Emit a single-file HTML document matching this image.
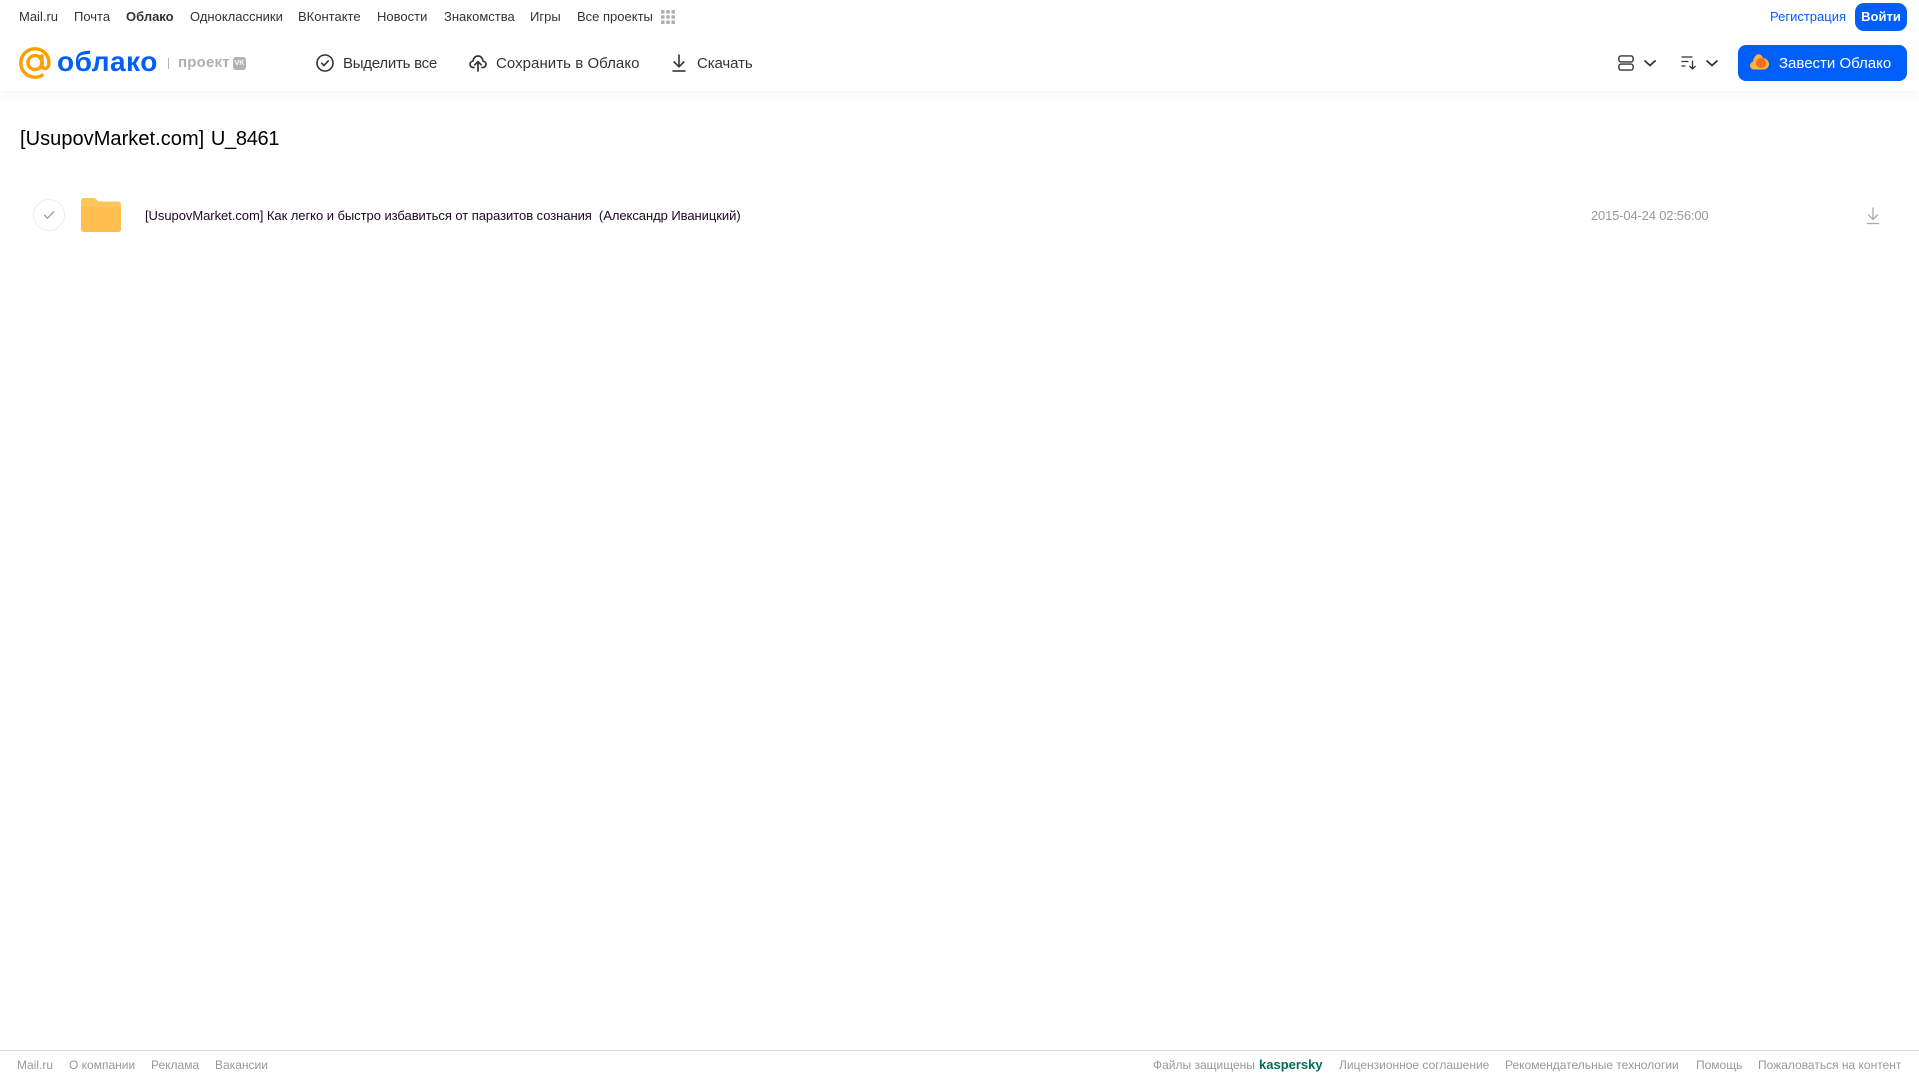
<!DOCTYPE html>
<html lang="ru"><head><meta charset="utf-8"><title>[UsupovMarket.com] U_8461</title>
<style>
html,body{margin:0;padding:0;background:#fff}
body{width:1919px;height:1079px;position:relative;overflow:hidden;font-family:"Liberation Sans",Arial,sans-serif}
.t{position:absolute;white-space:pre;line-height:20px}
.n{top:7px;font-size:13px;color:#333}
.b{top:53px;font-size:15px;color:#333;line-height:22px}
.f{top:1055px;font-size:12px;color:#999}
svg{position:absolute;overflow:visible}
#hdr{position:absolute;left:0;top:0;width:1919px;height:91px;background:#fff;box-shadow:0 2px 10px rgba(0,0,0,.06)}
</style></head><body>
<div id="hdr"></div>
<span class="t n" style="left:19px">Mail.ru</span>
<span class="t n" style="left:74px">Почта</span>
<span class="t n" style="left:126px;font-weight:bold">Облако</span>
<span class="t n" style="left:190px">Одноклассники</span>
<span class="t n" style="left:298px">ВКонтакте</span>
<span class="t n" style="left:377px">Новости</span>
<span class="t n" style="left:444px">Знакомства</span>
<span class="t n" style="left:530px">Игры</span>
<span class="t n" style="left:577px">Все проекты</span>
<svg style="left:661px;top:10px" width="14" height="14" fill="#b0b0b0"><rect width="3.6" height="3.6" rx=".8"/><rect x="5.2" width="3.6" height="3.6" rx=".8"/><rect x="10.4" width="3.6" height="3.6" rx=".8"/><rect y="5.2" width="3.6" height="3.6" rx=".8"/><rect x="5.2" y="5.2" width="3.6" height="3.6" rx=".8"/><rect x="10.4" y="5.2" width="3.6" height="3.6" rx=".8"/><rect y="10.4" width="3.6" height="3.6" rx=".8"/><rect x="5.2" y="10.4" width="3.6" height="3.6" rx=".8"/><rect x="10.4" y="10.4" width="3.6" height="3.6" rx=".8"/></svg>

<span class="t n" style="left:1770px;color:#005ff9">Регистрация</span>
<div style="position:absolute;left:1855px;top:3px;width:52px;height:28px;border-radius:9px;background:#005ff9;color:#fff;font-size:13px;font-weight:bold;line-height:27px;text-align:center">Войти</div>

<svg style="left:19px;top:47px" width="32" height="32" viewBox="0 0 32 32" fill="none" stroke="#ff9e00" stroke-width="3.4"><circle cx="16" cy="15.6" r="7"/><path d="M23 8.8v9.4c0 4.6 6.6 4.6 6.9-1.2C30.500 8 24 1.800 16 1.800 8.200 1.800 1.800 8.100 1.800 16S8.200 30.200 16 30.200c2.700 0 5.100-.7 7.100-1.900" stroke-linecap="round"/></svg>
<span class="t" style="left:57px;top:44px;font-size:28px;line-height:36px;font-weight:bold;color:#005ff9;letter-spacing:.5px">облако</span>
<div style="position:absolute;left:168px;top:58px;width:1px;height:11px;background:#b5b5b5"></div>
<span class="t" style="left:178px;top:53px;font-size:15px;line-height:20px;font-weight:bold;color:#b0b0b0;letter-spacing:.2px">проект</span>
<div style="position:absolute;left:233px;top:57px;width:13px;height:13px;border-radius:3px;background:#b3b3b3;color:#fff;font-size:7px;font-weight:bold;line-height:13px;text-align:center">VK</div>

<svg style="left:316px;top:54px" width="18" height="18" viewBox="0 0 18 18" fill="none" stroke="#333" stroke-width="1.6"><circle cx="9" cy="9" r="8"/><path d="M5.700 9.200l2.300 2.300 4.300-4.700" stroke-linecap="round" stroke-linejoin="round"/></svg>
<span class="t b" style="left:343px;letter-spacing:-.25px">Выделить все</span>
<svg style="left:469px;top:54px" width="18" height="18" viewBox="0 0 18 18" fill="none" stroke="#333" stroke-width="1.700" stroke-linecap="round" stroke-linejoin="round"><path d="M5 13.500H4.200C2.300 13.500 1 12 1 10.300c0-1.700 1.300-3 2.900-3.100C4.300 4.300 6.300 2 9 2c2.700 0 4.700 2.200 5.100 5.200 1.600.1 2.900 1.400 2.900 3.100 0 1.700-1.300 3.200-3.200 3.200H13"/><path d="M9 17V8M5.800 10.800L9 7.600l3.200 3.200"/></svg>
<span class="t b" style="left:496px;letter-spacing:.05px">Сохранить в Облако</span>
<svg style="left:672px;top:54px" width="14" height="18" viewBox="0 0 14 18" fill="none" stroke="#333" stroke-width="1.600"><path d="M7 .5v12M1.700 7.500L7 12.800l5.300-5.300"/><path d="M.5 17h13"/></svg>
<span class="t b" style="left:697px;letter-spacing:-.1px">Скачать</span>

<svg style="left:1618px;top:55px" width="16" height="16" viewBox="0 0 16 16" fill="none" stroke="#333" stroke-width="1.400"><rect x=".9" y=".9" width="14.200" height="6" rx="2"/><rect x=".9" y="9.100" width="14.200" height="6" rx="2"/></svg>
<svg style="left:1644px;top:60px" width="12" height="7" viewBox="0 0 12 7" fill="none" stroke="#333" stroke-width="1.800"><path d="M1 1l5 4.500L11 1" stroke-linecap="round" stroke-linejoin="round"/></svg>
<svg style="left:1681px;top:56px" width="16" height="14" viewBox="0 0 16 14" fill="none" stroke="#333" stroke-width="1.300"><path d="M.5 1h11M.5 5.500h7M.5 10h4M11.500 4.500v8.500M8.500 10l3 3 3-3"/></svg>
<svg style="left:1706px;top:60px" width="12" height="7" viewBox="0 0 12 7" fill="none" stroke="#333" stroke-width="1.800"><path d="M1 1l5 4.500L11 1" stroke-linecap="round" stroke-linejoin="round"/></svg>

<div style="position:absolute;left:1738px;top:45px;width:169px;height:36px;border-radius:8px;background:#005ff9"></div>
<svg style="left:1750px;top:54px" width="19" height="16" viewBox="0 0 19 16"><path d="M4 15.500C1.800 15.500 0 13.800 0 11.500 0 9.500 1.300 8 3 7.700 3.400 3.500 6 .3 8.500.3c2.200 0 3.700 1.500 4.500 3.700 3.400.2 6 3 6 6 0 3-2.400 5.500-5.500 5.500z" fill="#ffb13d"/><circle cx="11" cy="9" r="5" fill="#f26d21"/></svg>
<span class="t b" style="left:1779px;color:#fff">Завести Облако</span>

<span class="t" style="left:20px;top:126px;font-size:20px;line-height:27px;color:#000;letter-spacing:.05px;word-spacing:1px">[UsupovMarket.com] <span style="letter-spacing:-.3px">U_8461</span></span>

<svg style="left:33px;top:199px" width="32" height="32" viewBox="0 0 32 32" fill="none"><circle cx="16" cy="16" r="15.500" stroke="#eee"/><path d="M11.500 16.300l3 3 6-6.500" stroke="#a0a0a0" stroke-width="1.400" stroke-linecap="round" stroke-linejoin="round"/></svg>
<svg style="left:81px;top:198px" width="40" height="34" viewBox="0 0 40 34"><path d="M0 3a3 3 0 0 1 3-3h9.500c1.500 0 2.300.6 3 1.600L17 3.500h20a3 3 0 0 1 3 3V31a3 3 0 0 1-3 3H3a3 3 0 0 1-3-3z" fill="#ffc45c"/><path d="M0 9h40v22a3 3 0 0 1-3 3H3a3 3 0 0 1-3-3z" fill="#ffbe4d"/></svg>
<span class="t" style="left:145px;top:206px;font-size:13px;letter-spacing:-.05px;color:#1a0a1e">[UsupovMarket.com] Как легко и быстро избавиться от паразитов сознания  (Александр Иваницкий)</span>
<span class="t" style="left:1591px;top:206px;font-size:13px;letter-spacing:-.17px;color:#999">2015-04-24 02:56:00</span>
<svg style="left:1866px;top:207px" width="14" height="18" viewBox="0 0 14 18" fill="none" stroke="#aaa" stroke-width="1.300"><path d="M7 .5v12M2 7.500l5 5 5-5"/><path d="M.8 16.500h12.400"/></svg>

<div style="position:absolute;left:0;top:1050px;width:1919px;height:1px;background:#d9d9d9"></div>
<span class="t f" style="left:17px">Mail.ru</span>
<span class="t f" style="left:69px">О компании</span>
<span class="t f" style="left:151px">Реклама</span>
<span class="t f" style="left:215px">Вакансии</span>
<span class="t f" style="left:1153px">Файлы защищены</span>
<span class="t f" style="left:1259px;font-size:13px;font-weight:bold;color:#006d5c">kaspersky</span>
<span class="t f" style="left:1339px">Лицензионное соглашение</span>
<span class="t f" style="left:1505px">Рекомендательные технологии</span>
<span class="t f" style="left:1696px">Помощь</span>
<span class="t f" style="left:1758px">Пожаловаться на контент</span>
</body></html>
